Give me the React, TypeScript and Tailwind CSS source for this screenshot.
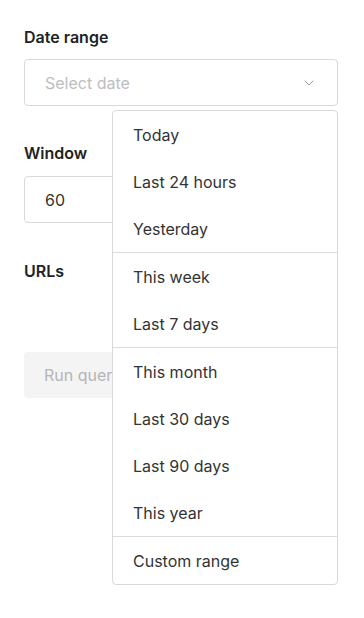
import { ChevronDown } from 'lucide-react';

const groups: string[][] = [
  ['Today', 'Last 24 hours', 'Yesterday'],
  ['This week', 'Last 7 days'],
  ['This month', 'Last 30 days', 'Last 90 days', 'This year'],
  ['Custom range'],
];

export default function App() {
  return (
    <div
      className="min-h-[618px] bg-white px-6 pt-[27px] text-[#333]"
      style={{ fontFamily: 'Inter, "Noto Sans", sans-serif' }}
    >
      <div className="w-[314px]">
        {/* Date range */}
        <label className="block text-base leading-5 font-semibold text-[#222]">Date range</label>
        <div className="relative mt-3">
          <div className="flex h-[47px] items-center justify-between rounded border border-[#d9d9d9] pl-5 pr-5">
            <span className="text-base text-[#bdbdbd]">Select date</span>
            <ChevronDown size={16} strokeWidth={1.5} className="text-[#9a9a9a]" />
          </div>

          <div className="absolute top-full right-0 left-[88px] z-10 mt-1 rounded border border-[#d9d9d9] bg-white">
            {groups.map((group, i) => (
              <div key={i} className={i > 0 ? 'border-t border-[#dcdcdc]' : ''}>
                {group.map((item) => (
                  <div key={item} className="flex h-[47px] items-center pl-5 text-base text-[#333]">
                    {item}
                  </div>
                ))}
              </div>
            ))}
          </div>
        </div>

        {/* Window */}
        <label className="mt-[37px] block text-base leading-5 font-semibold text-[#222]">Window</label>
        <div className="mt-[13px] flex h-[47px] items-center rounded border border-[#d9d9d9] pl-5 text-base text-[#333]">
          60
        </div>

        {/* URLs */}
        <label className="mt-[38px] block text-base leading-5 font-semibold text-[#222]">URLs</label>

        <button className="mt-[71px] flex h-[46px] w-full items-center rounded bg-[#f4f4f4] pl-5 text-base text-[#b5b5b5]">
          Run query
        </button>
      </div>
    </div>
  );
}
